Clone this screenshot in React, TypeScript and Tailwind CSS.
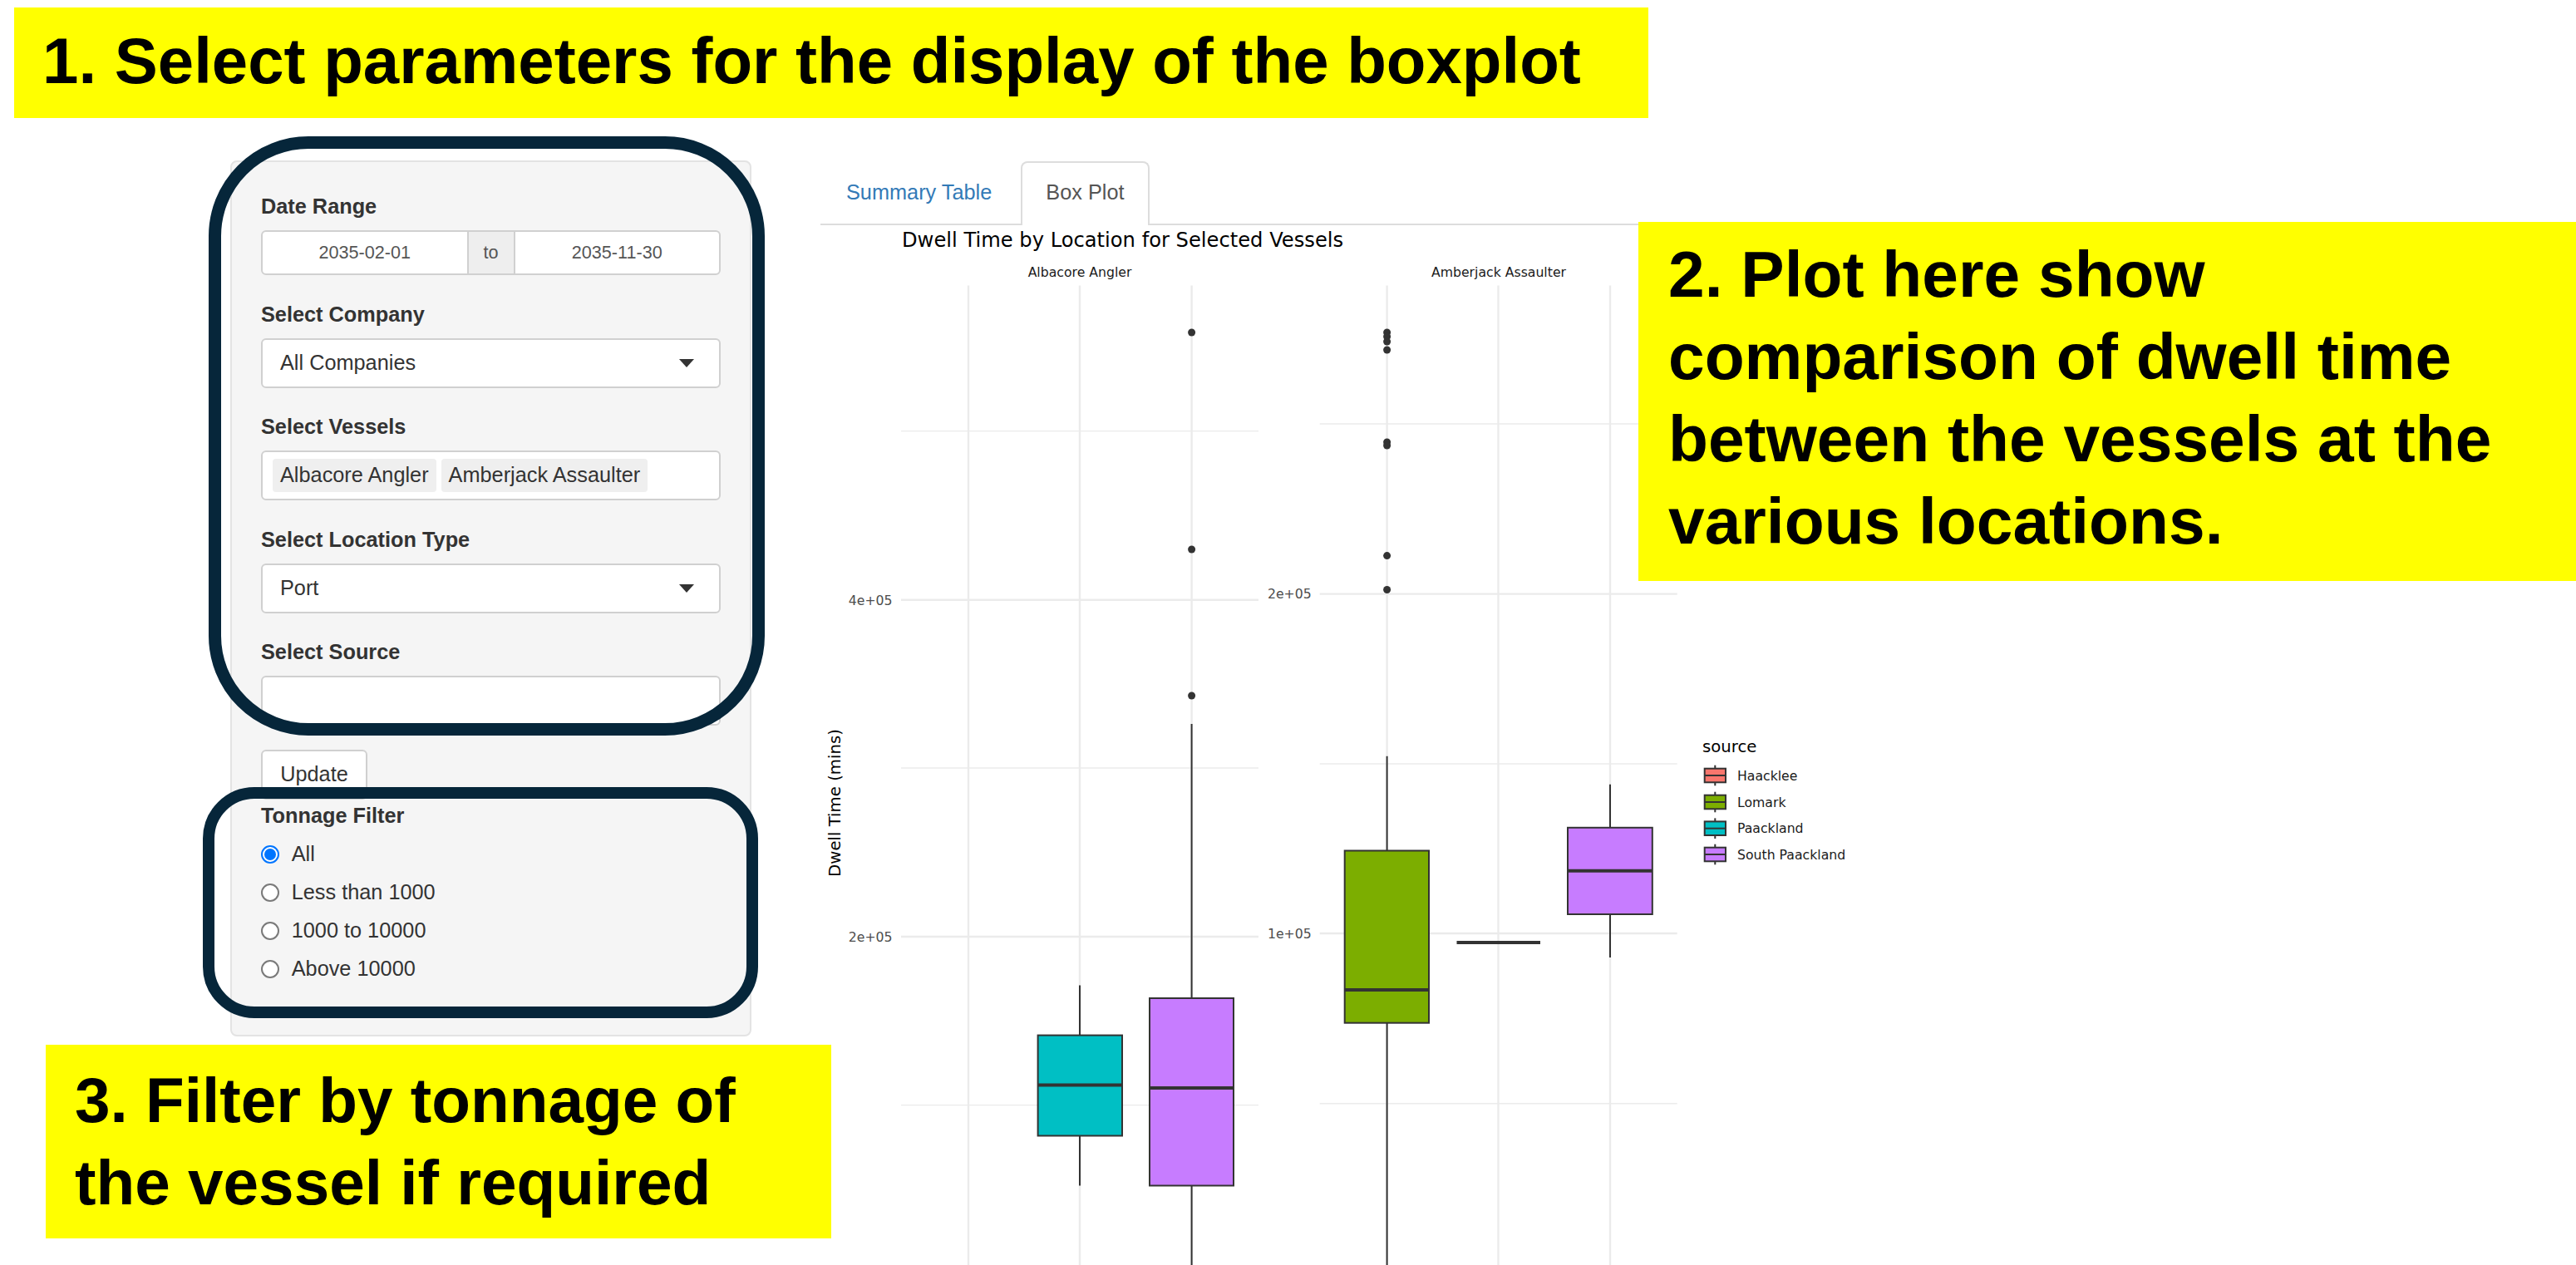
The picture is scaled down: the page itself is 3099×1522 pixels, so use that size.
import React from 'react';

const OX = 987;
const OY = 271;
const px = (v: number) => v - OX;
const py = (v: number) => v - OY;

const PLOT_FONT = "'DejaVu Sans', 'Liberation Sans', sans-serif";

type Box = { cx: number; x0: number; x1: number; top: number; bottom: number; med: number; wTop: number; wBot: number; fill: string };

const boxes: Box[] = [
    { cx: 1299, x0: 1248.6, x1: 1350, top: 1245.6, bottom: 1366.5, med: 1305.6, wTop: 1185.6, wBot: 1426.5, fill: '#00BFC4' },
    { cx: 1433.6, x0: 1383, x1: 1484, top: 1201, bottom: 1426.5, med: 1309, wTop: 871, wBot: 1600, fill: '#C77CFF' },
    { cx: 1668.6, x0: 1617.7, x1: 1719, top: 1023.5, bottom: 1230.7, med: 1191, wTop: 909.8, wBot: 1600, fill: '#7CAE00' },
    { cx: 1937, x0: 1886, x1: 1987.8, top: 995.8, bottom: 1100, med: 1047.7, wTop: 943.8, wBot: 1152, fill: '#C77CFF' },
];

const outliers: [number, number][] = [
    [1433.6, 400], [1433.6, 661], [1433.6, 837],
    [1668.6, 400], [1668.6, 405], [1668.6, 411], [1668.6, 421],
    [1668.6, 532], [1668.6, 536], [1668.6, 668.6], [1668.6, 709.5],
];

const panels = [
    {
        x0: 1084, x1: 1514, major: [721.8, 1127], minor: [518.6, 924, 1329.6], vert: [1165, 1299, 1433.6],
        ticks: [['4e+05', 721.8], ['2e+05', 1127]] as [string, number][], tickX: 1073.6, strip: 'Albacore Angler', stripX: 1299,
    },
    {
        x0: 1587.7, x1: 2017.7, major: [714.6, 1123], minor: [510, 919, 1327.7], vert: [1668.6, 1802.5, 1937],
        ticks: [['2e+05', 714.6], ['1e+05', 1123]] as [string, number][], tickX: 1577.7, strip: 'Amberjack Assaulter', stripX: 1803,
    },
];

const legend = [
    { name: 'Haacklee', color: '#F8766D', cy: 933 },
    { name: 'Lomark', color: '#7CAE00', cy: 965 },
    { name: 'Paackland', color: '#00BFC4', cy: 996.7 },
    { name: 'South Paackland', color: '#C77CFF', cy: 1028 },
];

const BoxPlot: React.FC = () => {
    const panelTop = 343.6;
    const panelBottom = 1560;
    return (
        <svg width={1300} height={1251} className="block">
            <text x={px(1085)} y={py(296.7)} fontFamily={PLOT_FONT} fontSize={24.2} fill="#000">
                Dwell Time by Location for Selected Vessels
            </text>
            {panels.map((p) => (
                <g key={p.strip}>
                    <text x={px(p.stripX)} y={py(333.3)} textAnchor="middle" fontFamily={PLOT_FONT} fontSize={15.7} fill="#1a1a1a">
                        {p.strip}
                    </text>
                    {p.minor.map((v) => (
                        <line key={'mn' + v} x1={px(p.x0)} x2={px(p.x1)} y1={py(v)} y2={py(v)} stroke="#ebebeb" strokeWidth={1.4} />
                    ))}
                    {p.major.map((v) => (
                        <line key={'mj' + v} x1={px(p.x0)} x2={px(p.x1)} y1={py(v)} y2={py(v)} stroke="#ebebeb" strokeWidth={2.4} />
                    ))}
                    {p.vert.map((v) => (
                        <line key={'v' + v} x1={px(v)} x2={px(v)} y1={py(panelTop)} y2={py(panelBottom)} stroke="#ebebeb" strokeWidth={2.4} />
                    ))}
                    {p.ticks.map(([t, v]) => (
                        <text key={t} x={px(p.tickX)} y={py(v + 5.7)} textAnchor="end" fontFamily={PLOT_FONT} fontSize={15.7} fill="#4d4d4d">
                            {t}
                        </text>
                    ))}
                </g>
            ))}
            <text
                transform={`translate(${px(1011)} ${py(966)}) rotate(-90)`}
                textAnchor="middle"
                fontFamily={PLOT_FONT}
                fontSize={19.7}
                fill="#000"
            >
                Dwell Time (mins)
            </text>
            {boxes.map((b, i) => (
                <g key={i}>
                    <line x1={px(b.cx)} x2={px(b.cx)} y1={py(b.wTop)} y2={py(b.top)} stroke="#333" strokeWidth={2} />
                    <line x1={px(b.cx)} x2={px(b.cx)} y1={py(b.bottom)} y2={py(b.wBot)} stroke="#333" strokeWidth={2} />
                    <rect x={px(b.x0)} y={py(b.top)} width={b.x1 - b.x0} height={b.bottom - b.top} fill={b.fill} stroke="#333" strokeWidth={2} />
                    <line x1={px(b.x0)} x2={px(b.x1)} y1={py(b.med)} y2={py(b.med)} stroke="#333" strokeWidth={4} />
                </g>
            ))}
            <line x1={px(1752.5)} x2={px(1853)} y1={py(1134)} y2={py(1134)} stroke="#333" strokeWidth={4} />
            {outliers.map(([cx, cy], i) => (
                <circle key={i} cx={px(cx)} cy={py(cy)} r={4.5} fill="#333" />
            ))}
            <text x={px(2048)} y={py(905)} fontFamily={PLOT_FONT} fontSize={19.7} fill="#000">
                source
            </text>
            {legend.map((l) => (
                <g key={l.name}>
                    <line x1={px(2063.3)} x2={px(2063.3)} y1={py(l.cy - 12.3)} y2={py(l.cy + 12.3)} stroke="#333" strokeWidth={2} />
                    <rect x={px(2050.7)} y={py(l.cy - 8.3)} width={25.3} height={16.6} fill={l.color} stroke="#333" strokeWidth={2} />
                    <line x1={px(2050.7)} x2={px(2076)} y1={py(l.cy)} y2={py(l.cy)} stroke="#333" strokeWidth={2} />
                    <text x={px(2090)} y={py(l.cy + 5.7)} fontFamily={PLOT_FONT} fontSize={15.7} fill="#1a1a1a">
                        {l.name}
                    </text>
                </g>
            ))}
        </svg>
    );
};

const Label: React.FC<{ children: React.ReactNode }> = ({ children }) => (
    <div className="h-[36px] leading-[36px] mb-[11px] font-bold text-[25.3px] text-[#333]">{children}</div>
);

const Caret = () => <span className="w-0 h-0 border-x-[9.5px] border-x-transparent border-t-[10px] border-t-[#333]" />;

const Radio: React.FC<{ label: string; checked?: boolean }> = ({ label, checked }) => (
    <div className="flex items-center h-[36px] mb-[10px] text-[25.3px] text-[#333]">
        {checked ? (
            <span className="w-[22px] h-[22px] rounded-full border-2 border-[#0075ff] bg-white flex items-center justify-center">
                <span className="w-[14px] h-[14px] rounded-full bg-[#0075ff]" />
            </span>
        ) : (
            <span className="w-[22px] h-[22px] rounded-full border-2 border-[#7a7a7a] bg-white" />
        )}
        <span className="ml-[14.7px]">{label}</span>
    </div>
);

const Sidebar: React.FC = () => (
    <div className="w-[627px] h-[1054px] bg-[#f5f5f5] border-2 border-[#e3e3e3] rounded-[8px] pl-[35px] pt-[35px] font-['Liberation_Sans',Arial,sans-serif]">
        <div className="w-[553px]">
            <div className="mb-[28.5px]">
                <Label>Date Range</Label>
                <div className="flex h-[54px] rounded-[6px] border-2 border-[#d0d0d0] bg-white overflow-hidden text-[21.6px] text-[#555]">
                    <div className="flex-1 flex items-center justify-center">2035-02-01</div>
                    <div className="w-[58px] flex items-center justify-center bg-[#eeeeee] border-x-2 border-[#d0d0d0]">to</div>
                    <div className="flex-1 flex items-center justify-center">2035-11-30</div>
                </div>
            </div>
            <div className="mb-[28.5px]">
                <Label>Select Company</Label>
                <div className="flex items-center justify-between h-[60px] rounded-[6px] border-2 border-[#d0d0d0] bg-white pl-[21px] pr-[30px] text-[25.3px] text-[#333]">
                    <span>All Companies</span>
                    <Caret />
                </div>
            </div>
            <div className="mb-[28.5px]">
                <Label>Select Vessels</Label>
                <div className="flex items-center gap-[6px] h-[60px] rounded-[6px] border-2 border-[#d0d0d0] bg-white pl-[12px] text-[25.3px] text-[#333]">
                    <span className="h-[40px] px-[9px] rounded-[4px] bg-[#efefef] flex items-center">Albacore Angler</span>
                    <span className="h-[40px] px-[9px] rounded-[4px] bg-[#efefef] flex items-center">Amberjack Assaulter</span>
                </div>
            </div>
            <div className="mb-[28.5px]">
                <Label>Select Location Type</Label>
                <div className="flex items-center justify-between h-[60px] rounded-[6px] border-2 border-[#d0d0d0] bg-white pl-[21px] pr-[30px] text-[25.3px] text-[#333]">
                    <span>Port</span>
                    <Caret />
                </div>
            </div>
            <div className="mb-[28.5px]">
                <Label>Select Source</Label>
                <div className="h-[60px] rounded-[6px] border-2 border-[#d0d0d0] bg-white" />
            </div>
            <button className="flex items-center justify-center h-[60px] w-[128px] rounded-[6px] border-2 border-[#d0d0d0] bg-white text-[25.3px] text-[#333]">
                Update
            </button>
            <div className="mt-[1.5px]">
                <Label>Tonnage Filter</Label>
                <Radio label="All" checked />
                <Radio label="Less than 1000" />
                <Radio label="1000 to 10000" />
                <Radio label="Above 10000" />
            </div>
        </div>
    </div>
);

const Tabs: React.FC = () => (
    <div className="flex border-b-2 border-[#dddddd] font-['Liberation_Sans',Arial,sans-serif] text-[25.3px]">
        <div className="h-[77px] -mb-[2px] border-2 border-b-0 border-transparent px-[29px] pt-[16px] leading-[38px] text-[#337ab7] mr-[4px]">
            Summary Table
        </div>
        <div className="h-[77px] -mb-[2px] border-2 border-b-0 border-[#dddddd] rounded-t-[8px] bg-white px-[28px] pt-[16px] leading-[38px] text-[#555]">
            Box Plot
        </div>
    </div>
);

const App: React.FC = () => {
    return (
        <div className="relative w-[3099px] h-[1522px] overflow-hidden bg-white">
            <div className="flex items-start pt-[193px] pl-[277px]">
                <Sidebar />
                <div className="ml-[83px] flex-1 pt-[1px]">
                    <Tabs />
                    <BoxPlot />
                </div>
            </div>

            {/* annotation callouts */}
            <div className="absolute left-[17px] top-[9px] w-[1966px] h-[133px] bg-[#ffff00] pl-[34px] pt-[25px] font-['Liberation_Sans',Arial,sans-serif] font-bold text-[78px] leading-[78px] text-black whitespace-nowrap">
                1. Select parameters for the display of the boxplot
            </div>
            <div className="absolute left-[1971px] top-[267px] right-0 h-[432px] bg-[#ffff00] pl-[36px] pt-[14px] font-['Liberation_Sans',Arial,sans-serif] font-bold text-[78.5px] leading-[99px] text-black whitespace-nowrap">
                2. Plot here show
                <br />
                comparison of dwell time
                <br />
                between the vessels at the
                <br />
                various locations.
            </div>
            <div className="absolute left-[55px] top-[1257px] w-[945px] h-[233px] bg-[#ffff00] pl-[35px] pt-[17px] font-['Liberation_Sans',Arial,sans-serif] font-bold text-[76.5px] leading-[99px] text-black whitespace-nowrap">
                3. Filter by tonnage of
                <br />
                the vessel if required
            </div>
            <div className="absolute left-[251px] top-[164px] w-[669px] h-[721px] border-[15px] border-[#06263a] rounded-[120px] pointer-events-none" />
            <div className="absolute left-[244px] top-[947px] w-[668px] h-[278px] border-[14px] border-[#06263a] rounded-[62px] pointer-events-none" />
        </div>
    );
};

export default App;
